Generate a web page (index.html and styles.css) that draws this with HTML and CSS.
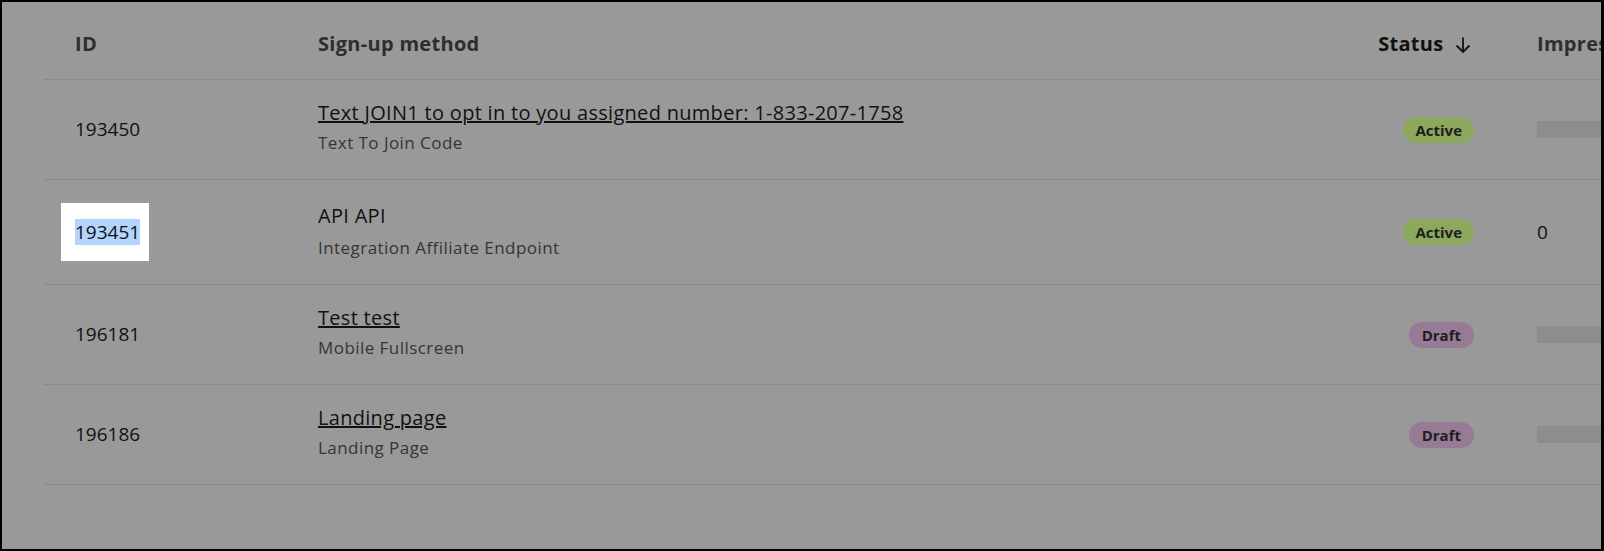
FILE: index.html
```html
<!DOCTYPE html>
<html lang="en">
<head>
    <meta charset="UTF-8">
    <meta name="viewport" content="width=device-width, initial-scale=1.0">
    <title>Sign-up Units</title>
    <link rel="stylesheet" href="styles.css">
</head>
<body>
    <div class="screen">
        <table class="units">
            <colgroup>
                <col class="col-id">
                <col class="col-method">
                <col class="col-status">
                <col class="col-imp">
            </colgroup>
            <thead>
                <tr>
                    <th class="cell-id">ID</th>
                    <th>Sign-up method</th>
                    <th class="cell-status sorted">
                        Status
                        <svg class="sort-arrow" width="18" height="18" viewBox="0 0 18 18">
                            <path d="M9 1.5V16M2.5 9.5L9 16l6.5-6.5" fill="none" stroke="currentColor" stroke-width="1.8"/>
                        </svg>
                    </th>
                    <th class="cell-imp">Impressions</th>
                </tr>
            </thead>
            <tbody>
                <tr>
                    <td class="cell-id">193450</td>
                    <td class="cell-method">
                        <a class="title" href="#">Text JOIN1 to opt in to you assigned number: 1-833-207-1758</a>
                        <span class="sub">Text To Join Code</span>
                    </td>
                    <td class="cell-status"><span class="badge active">Active</span></td>
                    <td class="cell-imp"><span class="loading-bar"></span></td>
                </tr>
                <tr>
                    <td class="cell-id"><span class="spotlight"><span class="selected">193451</span></span></td>
                    <td class="cell-method">
                        <span class="title plain">API API</span>
                        <span class="sub">Integration Affiliate Endpoint</span>
                    </td>
                    <td class="cell-status"><span class="badge active">Active</span></td>
                    <td class="cell-imp">0</td>
                </tr>
                <tr>
                    <td class="cell-id">196181</td>
                    <td class="cell-method">
                        <a class="title" href="#">Test test</a>
                        <span class="sub">Mobile Fullscreen</span>
                    </td>
                    <td class="cell-status"><span class="badge draft">Draft</span></td>
                    <td class="cell-imp"><span class="loading-bar"></span></td>
                </tr>
                <tr>
                    <td class="cell-id">196186</td>
                    <td class="cell-method">
                        <a class="title" href="#">Landing page</a>
                        <span class="sub">Landing Page</span>
                    </td>
                    <td class="cell-status"><span class="badge draft">Draft</span></td>
                    <td class="cell-imp"><span class="loading-bar"></span></td>
                </tr>
            </tbody>
        </table>
    </div>
</body>
</html>
```

FILE: styles.css
```css
body {
    margin: 0;
    background-color: #000;
    font-family: "Open Sans", sans-serif;
}

/* dimmed page, as seen behind the tour overlay */
.screen {
    margin: 2px 3px 2px 2px;
    height: 547px;
    background-color: #999;
    overflow: hidden;
}

.units {
    margin-left: 41px;
    width: 1663px;
    table-layout: fixed;
    border-collapse: collapse;
}
.col-id { width: 275px; }
.col-method { width: 988px; }
.col-status { width: 200px; }
.col-imp { width: 200px; }

th, td {
    padding: 0;
    box-sizing: border-box;
    text-align: left;
    vertical-align: middle;
    border-bottom: 1px solid #8a8a8a;
}
th {
    height: 77px;
    padding-top: 7px;
    font-size: 20px;
    font-weight: 700;
    letter-spacing: 0.3px;
    color: #2e2e2e;
}
th.sorted {
    color: #111;
}
td {
    height: 99px;
    color: #111;
    font-size: 19px;
}

.cell-id {
    padding-left: 32px;
}
.cell-status {
    text-align: right;
    padding-right: 34px;
}
.cell-imp {
    padding-left: 31px;
}
.sort-arrow {
    vertical-align: -3px;
    margin-left: 5px;
}

.cell-method {
    padding: 19px 0 25px;
}
.title {
    display: block;
    line-height: 28px;
    color: #111;
    font-size: 20px;
    letter-spacing: 0.3px;
}
.title.plain {
    line-height: 33px;
}
.sub {
    display: block;
    margin-top: 5px;
    line-height: 22px;
    font-size: 17px;
    letter-spacing: 0.45px;
    color: #353535;
}

.badge {
    display: inline-block;
    height: 26px;
    line-height: 26px;
    padding: 0 12px;
    border-radius: 13px;
    font-size: 15px;
    font-weight: 700;
    color: #1e1e1e;
}
.badge.active {
    background-color: #8ca85c;
}
.badge.draft {
    padding: 0 13px;
    background-color: #967a96;
}

.cell-status .badge {
    margin-right: -2px;
}

.loading-bar {
    display: block;
    height: 17px;
    background-color: #8d8d8d;
}

/* the tour highlights this cell on top of the overlay */
.spotlight {
    display: inline-block;
    margin-left: -14px;
    padding: 16px 9px 16px 14px;
    background-color: #fff;
    line-height: 26px;
}
.selected {
    background-color: #b3d4fc;
}
```
